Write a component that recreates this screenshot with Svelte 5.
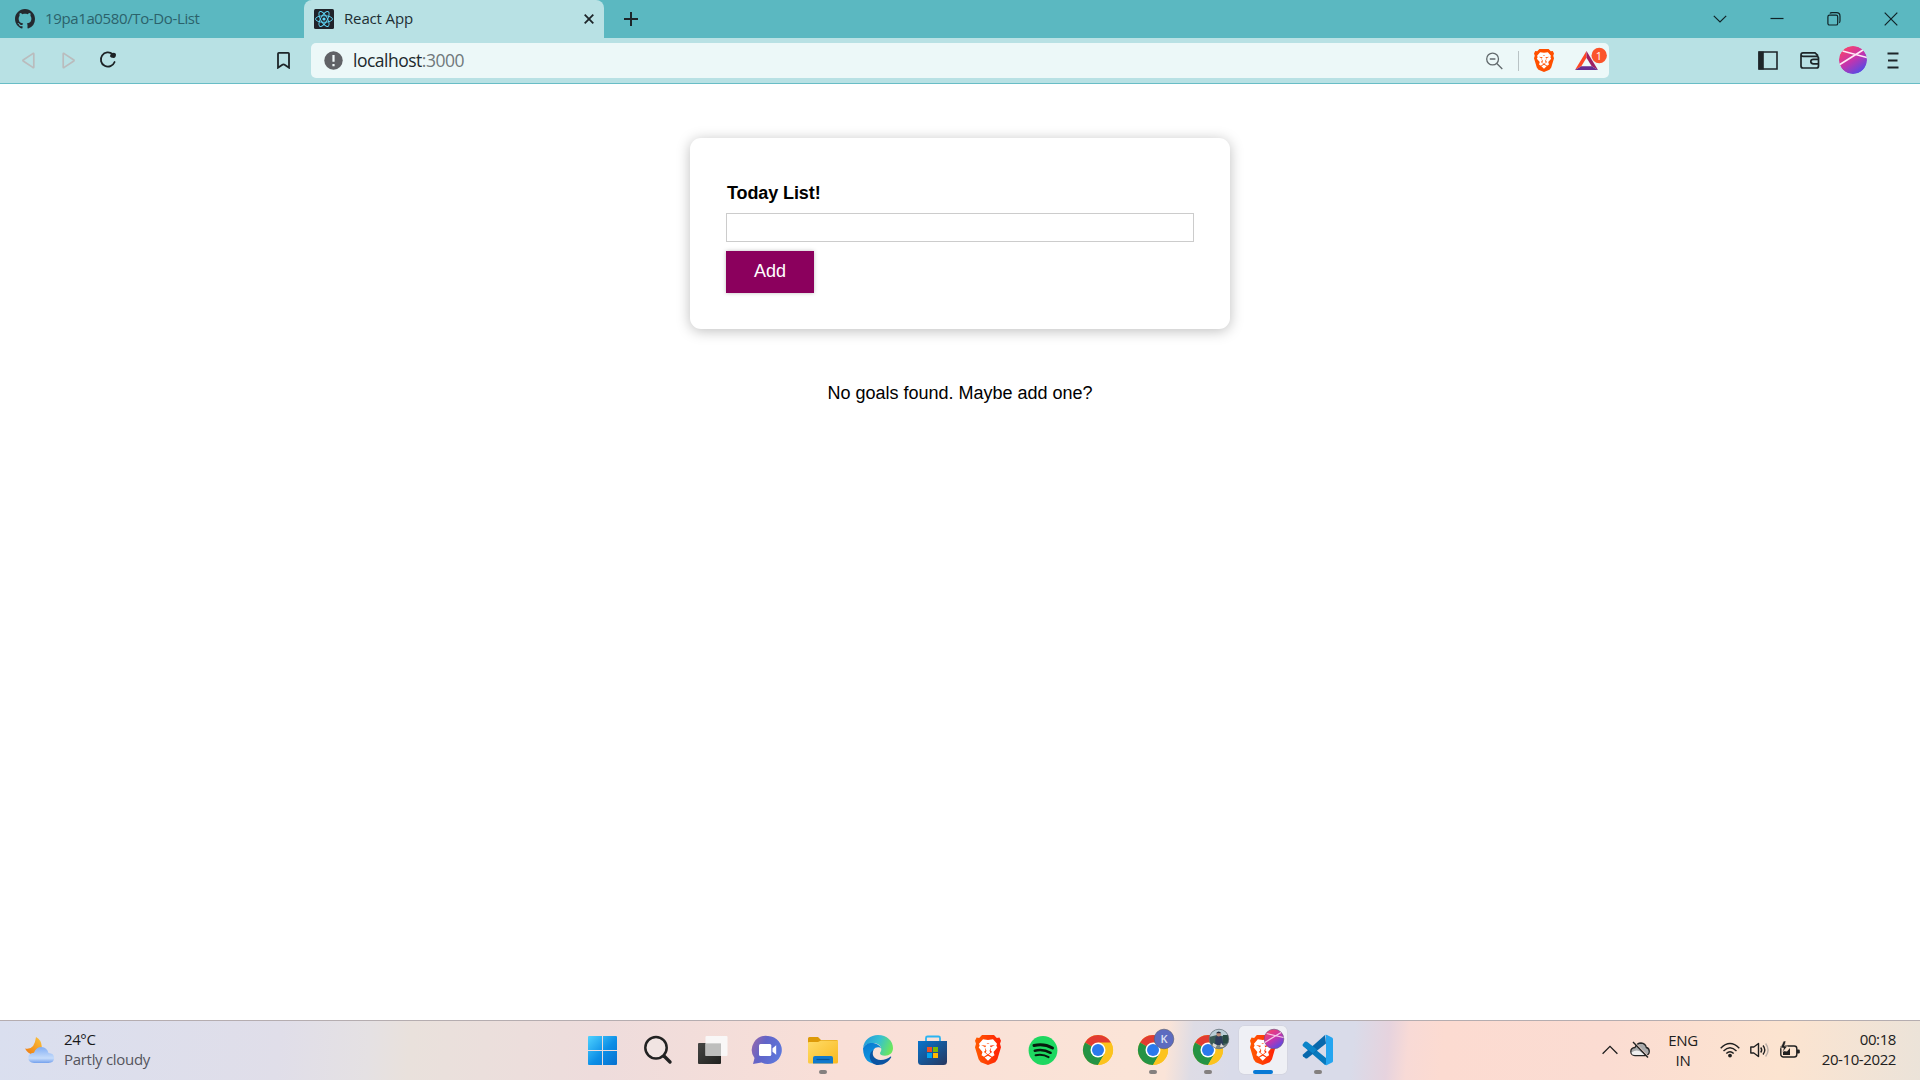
<script>
  let goal = $state('');
  const apps = ['start', 'search', 'tasks', 'chat', 'files', 'edge', 'store', 'brave', 'spotify', 'chrome', 'chromeK', 'chromePhoto', 'braveActive', 'code'];
  const running = ['files', 'chromeK', 'chromePhoto', 'code'];
</script>

{#snippet lion(fill)}
  <path d="M7 0h12l2.800 3 2.600-.3L26 6l-1 3 1 3.500-3.600 12.500-2.200 3L13 31 5.800 28l-2.200-3L0 12.500 1 9 0 6l1.600-3.300 2.600.3z" {fill} />
  <path d="M8 4.300l5 .9 5-.9 4 4.700-.7 2 1 2-3.800 4.600 1 3.200-2.500 1.700-4-2.800-4 2.800-2.500-1.700 1-3.200L3.700 13l1-2-.7-2zM9.600 23.300l3.400-2 3.400 2-3.400 3.200z" fill="#fff" />
  <path d="M6.200 10.300l5 .9-1 1.500zM19.800 10.300l-5 .9 1 1.500zM11.400 8.200h3.200L13 9zM9.700 12.500l1.800 3.800-.8 1.800 2.300 1.900 2.300-1.900-.8-1.800 1.800-3.800-.7 3.600 1.500 1.500-4.100 3-4.100-3 1.500-1.500z" {fill} />
{/snippet}

{#snippet chrome()}
  <circle cx="24" cy="24" r="15" fill="#fcc31e" />
  <path d="M24 24L11 16.500A15 15 0 0 1 37 16.500z" fill="#e23b31" />
  <path d="M11 16.500A15 15 0 0 0 24 39l6.500-11.300L24 24z" fill="#249344" />
  <path d="M24 16.500h13A15 15 0 0 1 24 39l6.500-11.300z" fill="#fcc31e" />
  <circle cx="24" cy="24" r="7.500" fill="#fff" />
  <circle cx="24" cy="24" r="6" fill="#2a79ed" />
{/snippet}

<div class="screen">
  <header>
    <div class="tabs">
      <div class="tab idle">
        <svg width="20" height="20" viewBox="0 0 16 16"><path fill="#24292f" d="M8 0C3.580 0 0 3.580 0 8c0 3.540 2.290 6.530 5.470 7.590.4.070.55-.17.55-.38 0-.19-.01-.82-.01-1.490-2.010.37-2.530-.49-2.690-.94-.09-.23-.48-.94-.82-1.130-.28-.15-.68-.52-.01-.53.63-.01 1.080.58 1.230.82.72 1.210 1.870.87 2.330.66.070-.52.28-.87.51-1.070-1.780-.2-3.640-.89-3.640-3.950 0-.87.31-1.590.82-2.150-.08-.2-.36-1.020.08-2.120 0 0 .67-.21 2.200.82.64-.18 1.320-.27 2-.27s1.360.09 2 .27c1.530-1.040 2.200-.82 2.200-.82.44 1.100.16 1.920.08 2.120.51.56.82 1.270.82 2.150 0 3.070-1.870 3.750-3.650 3.950.29.25.54.73.54 1.480 0 1.070-.01 1.930-.01 2.200 0 .21.15.46.55.38A8.010 8.010 0 0 0 16 8c0-4.420-3.580-8-8-8z" /></svg>
        <span class="repo">19pa1a0580/To-Do-List</span>
      </div>
      <div class="tab active">
        <svg width="20" height="20" viewBox="0 0 20 20"><rect width="20" height="20" rx="1.500" fill="#20232a" /><g fill="none" stroke="#61dafb" stroke-width=".9"><ellipse cx="10" cy="10" rx="8.500" ry="3.300" /><ellipse cx="10" cy="10" rx="8.500" ry="3.300" transform="rotate(60 10 10)" /><ellipse cx="10" cy="10" rx="8.500" ry="3.300" transform="rotate(120 10 10)" /></g><circle cx="10" cy="10" r="1.600" fill="#61dafb" /></svg>
        <span class="title">React App</span>
        <svg class="x" width="10" height="10" viewBox="0 0 10 10"><path d="M.7.7l8.600 8.600M9.300.7L.7 9.300" stroke="#1d2529" stroke-width="1.800" /></svg>
      </div>
      <svg class="plus" width="14" height="14" viewBox="0 0 14 14"><path d="M7 0v14M0 7h14" stroke="#1d2529" stroke-width="2" /></svg>
      <div class="window">
        <svg width="14" height="14" viewBox="0 0 14 14"><path d="M.8 3.800L7 10l6.200-6.200" /></svg>
        <svg width="14" height="14" viewBox="0 0 14 14"><path d="M.5 6.500h13" /></svg>
        <svg width="14" height="14" viewBox="0 0 14 14"><rect x=".9" y="3.200" width="9.800" height="9.800" rx="1.600" /><path d="M3 1.500Q3.300.7 5 .7h4.500q3.500 0 3.500 3.500v4.500q0 1.600-.8 2" /></svg>
        <svg width="14" height="14" viewBox="0 0 14 14"><path d="M.7.7l12.600 12.600M13.300.7L.7 13.300" /></svg>
      </div>
    </div>
    <div class="toolbar">
      <div class="nav">
        <svg class="back" width="13" height="17" viewBox="0 0 13 17"><path d="M11.800 2v13q0 1-1 .4L1.200 9q-.6-.5 0-1l9.600-6.400q1-.6 1 .4z" fill="none" stroke="#babcbd" stroke-width="1.700" /></svg>
        <svg class="fwd" width="13" height="17" viewBox="0 0 13 17"><path d="M1.200 2v13q0 1 1 .4L11.800 9q.6-.5 0-1L2.200 1.600q-1-.6-1 .4z" fill="none" stroke="#babcbd" stroke-width="1.700" /></svg>
        <svg class="reload" width="18" height="18" viewBox="0 0 18 18"><path d="M13.700 3.200A7.100 7.100 0 1 0 15.600 11" fill="none" stroke="#1c2225" stroke-width="1.800" stroke-linecap="round" /><path d="M12 2.300q4.500-1.600 5 1 0 3.700-2.400 3.700-3.200 0-3.700-1.700z" fill="#1c2225" /></svg>
        <svg class="mark" width="13" height="17" viewBox="0 0 13 17"><path d="M1 1.800q0-.9.900-.9h9.200q.9 0 .9.900V15.700L8 12.900q-1.500-1-3 0L1 15.700z" fill="none" stroke="#1d2528" stroke-width="1.800" /></svg>
      </div>
      <div class="address">
        <svg width="19" height="19" viewBox="0 0 19 19"><circle cx="9.500" cy="9.500" r="9.200" fill="#606266" /><path d="M9.500 4v6.800M9.500 13v2.300" stroke="#f2fafa" stroke-width="2.200" /></svg>
        <span class="url">localhost<i>:3000</i></span>
        <svg class="zoom" width="17" height="18" viewBox="0 0 17 18"><g fill="none" stroke="#626a6d" stroke-width="1.300"><circle cx="6.600" cy="7" r="5.900" /><path d="M3.800 7h5.600M10.800 11.500l5.500 5.500" /></g></svg>
        <b class="bar"></b>
        <svg width="20" height="23" viewBox="0 0 26 31" preserveAspectRatio="none">{@render lion('#ff5000')}</svg>
        <svg class="bat" width="34" height="24" viewBox="0 0 34 24"><path d="M11.500 4L0 23l6.300-3.700 5.200-8.600z" fill="#ff4724" /><path d="M11.500 4L23 23l-6.300-3.700-5.200-8.600z" fill="#9e1f63" /><path d="M0 23h23l-6.300-3.700H6.300z" fill="#662d91" /><circle cx="24.200" cy="8.500" r="7.700" fill="#fb542b" /><text x="24" y="12.500" text-anchor="middle" font-size="11" fill="#fff">1</text></svg>
      </div>
      <div class="tools">
        <svg width="20" height="19" viewBox="0 0 20 19"><path d="M1 1h18v17H1z" fill="none" stroke="#1d2528" stroke-width="1.600" /><path d="M.5.500h5.300v18H.5z" fill="#1d2528" /></svg>
        <svg width="20" height="17" viewBox="0 0 20 17"><g fill="none" stroke="#1d2528" stroke-width="1.700"><path d="M17.500 4.500V3.200L15 .9H3Q1 .9 1 3v11q0 2 2 2h13.500q2 0 2-2V6.300q0-2-2-2H3Q1.200 4.300 1 3M18.500 7.300h-5q-2.700 0-2.700 2.300t2.700 2.300h5z" /></g></svg>
        <svg class="avatar" width="28" height="28" viewBox="0 0 28 28"><defs><linearGradient id="av" x1=".15" y1="0" x2=".85" y2="1"><stop stop-color="#ff4463" /><stop offset=".5" stop-color="#c334ae" /><stop offset="1" stop-color="#404ff0" /></linearGradient></defs><circle cx="14" cy="14" r="14" fill="url(#av)" /><path d="M0 19L24 4M3.500 5L28 11.500" stroke="#ffe9f6" stroke-width="1.600" fill="none" /></svg>
        <svg width="12" height="17" viewBox="0 0 12 17"><path d="M.5 1.500h11M1 8.500h9.500M.5 15.500h11" stroke="#1d2528" stroke-width="1.800" /></svg>
      </div>
    </div>
  </header>

  <main>
    <form class="card" onsubmit={(e) => e.preventDefault()}>
      <label for="goal">Today List!</label>
      <input id="goal" type="text" bind:value={goal} />
      <button type="submit">Add</button>
    </form>
    <p>No goals found. Maybe add one?</p>
  </main>

  <footer>
    <div class="weather">
      <svg width="30" height="27" viewBox="0 0 30 27"><defs><linearGradient id="moon" x1="1" y1="0" x2="0" y2="1"><stop stop-color="#fbc43d" /><stop offset="1" stop-color="#ee7910" /></linearGradient><linearGradient id="cloud" x1="0" y1="0" x2="0" y2="1"><stop stop-color="#82aef4" /><stop offset=".7" stop-color="#c6dcfb" /><stop offset="1" stop-color="#74a1ed" /></linearGradient></defs><path d="M11 0q5.500 3 5.800 9.500Q15.500 17.500 8 17.500 3 17 0 11.500q9.500 2 11-11.500z" fill="url(#moon)" /><path d="M9 26q-5.500-.3-5.700-5Q3.500 16 9 15.800q2-5.800 7.500-5.800 5.500.3 7 6 5.500.2 5.700 5-.3 4.800-5.700 5z" fill="url(#cloud)" /></svg>
      <div><span class="temp">24°C</span><span class="sky">Partly cloudy</span></div>
    </div>

    <div class="apps">
      {#each apps as app}
        <div class="app" class:focused={app === 'braveActive'}>
          <svg width="48" height="48" viewBox="0 0 48 48">
            {#if app === 'start'}
              <defs><linearGradient id="win" x1="0" y1="0" x2="1" y2="1"><stop stop-color="#4fd2ff" /><stop offset=".55" stop-color="#0c8ee6" /><stop offset="1" stop-color="#0670cf" /></linearGradient></defs>
              <path d="M10 10h13v14H9V11q0-1 1-1zM24 10h13q1 0 1 1v13H24zM9 25h14v14H10q-1 0-1-1zM24 25h14v13q0 1-1 1H24z" fill="url(#win)" />
            {:else if app === 'search'}
              <circle cx="22" cy="21.700" r="10.700" fill="#f1e4e2" stroke="#222" stroke-width="2.500" /><path d="M30 30l6 6" stroke="#222" stroke-width="3.400" stroke-linecap="round" />
            {:else if app === 'tasks'}
              <defs><linearGradient id="dark" x1="0" y1="0" x2="1" y2="1"><stop stop-color="#464644" /><stop offset="1" stop-color="#20211f" /></linearGradient></defs>
              <rect x="9" y="17" width="23" height="21" rx="1" fill="url(#dark)" /><rect x="16.500" y="10" width="22" height="20" rx="1" fill="#fafafa" opacity=".9" /><path d="M16.500 17.500H32V30H16.500z" fill="#bebebd" />
            {:else if app === 'chat'}
              <defs><linearGradient id="talk" x1="0" y1=".2" x2="1" y2=".6"><stop stop-color="#9467ae" /><stop offset=".4" stop-color="#6164c8" /><stop offset="1" stop-color="#5d78dc" /></linearGradient></defs>
              <path d="M24 10a14 14 0 1 1-6.500 26.500L9 38l1.500-6A14 14 0 0 1 24 10z" fill="url(#talk)" /><rect x="15" y="18" width="12.300" height="12" rx="1.500" fill="#fff" /><path d="M28.500 22.300l3.700-3v9.400l-3.700-3z" fill="#fff" />
            {:else if app === 'files'}
              <defs><linearGradient id="fold" x1="0" y1="0" x2="1" y2="1"><stop stop-color="#ffdc68" /><stop offset="1" stop-color="#f9b91f" /></linearGradient></defs>
              <path d="M9 12.500q0-1.500 1.500-1.500h8.500l3 3h15.500q1.500 0 1.500 1.500V20H9z" fill="#dd9a08" /><path d="M9 17q0-1 1-1h9l3-1.500h17V36q0 1.500-1.500 1.500h-27Q9 37.500 9 36z" fill="url(#fold)" /><path d="M14 37.500V32q0-2 2-2h16q2 0 2 2v5.500z" fill="#1179cc" /><path d="M17.500 33.500h13" stroke="#075597" stroke-width="1.200" />
            {:else if app === 'edge'}
              <defs><linearGradient id="ea" x1="0" y1=".2" x2="1" y2=".5"><stop stop-color="#2399da" /><stop offset=".5" stop-color="#35bfd3" /><stop offset="1" stop-color="#6be75d" /></linearGradient><linearGradient id="eb" x1="0" y1="0" x2=".4" y2="1"><stop stop-color="#0678d0" /><stop offset="1" stop-color="#139ae1" /></linearGradient></defs>
              <path d="M9 22C10 14 16.500 9 24 9c9 0 15 6 15 13 0 5-3.500 7.700-8 7.700-3.300 0-5-1.200-5-2.400 0-1 1.300-1.500 1.300-4C27.300 19.500 23.500 17 19 17c-5 0-9 2.500-10 5z" fill="url(#ea)" /><path d="M9 22.500C10.500 18.500 14.500 16.500 19 17c4 .4 7.300 2.800 8.200 5.500-1.400-1.500-5.800-2-7.800 1.500-3.400 6 1.600 12.600 9.400 11.700C25 38.800 9.500 41 9 22.500z" fill="url(#eb)" /><path d="M19.500 24c-2.500 5 1 9.800 7 10 4 .1 7.500-1.700 9.800-3.300.6-.4 1.200.2.800.8-2.500 4.300-7 7.500-13 7.500-8 0-11.500-11-4.600-15z" fill="#0b54a2" />
            {:else if app === 'store'}
              <defs><linearGradient id="bag" x1="0" y1="0" x2="1" y2="1"><stop stop-color="#0874cc" /><stop offset="1" stop-color="#27375f" /></linearGradient></defs>
              <path d="M17 16v-4q0-1.500 1.500-1.500h11q1.500 0 1.500 1.500v4" fill="none" stroke="#2bb4f2" stroke-width="1.800" /><path d="M9 15h29v20.500q0 3.500-3.500 3.500h-22Q9 39 9 35.500z" fill="url(#bag)" /><path d="M18 21h5v5h-5z" fill="#f25022" /><path d="M24 21h5v5h-5z" fill="#7fba00" /><path d="M18 27h5v5h-5z" fill="#00a4ef" /><path d="M24 27h5v5h-5z" fill="#ffb900" />
            {:else if app === 'brave'}
              <defs><linearGradient id="flame" x1="0" y1="0" x2="1" y2="0"><stop stop-color="#ff5a00" /><stop offset="1" stop-color="#ff2107" /></linearGradient></defs>
              <g transform="translate(11 9) scale(1 .97)">{@render lion('url(#flame)')}</g>
            {:else if app === 'spotify'}
              <circle cx="24" cy="24.500" r="14.400" fill="#1ed760" /><path d="M15 19.500q10-2.300 18.500 2.500" fill="none" stroke="#061a0d" stroke-width="3" stroke-linecap="round" /><path d="M15.800 24.700q8.500-2 15.800 2.100" fill="none" stroke="#061a0d" stroke-width="2.500" stroke-linecap="round" /><path d="M16.600 29.200q7.300-1.500 13 1.900" fill="none" stroke="#061a0d" stroke-width="2" stroke-linecap="round" />
            {:else if app === 'chrome'}
              {@render chrome()}
            {:else if app === 'chromeK'}
              {@render chrome()}
              <circle cx="35" cy="13" r="9.800" fill="#5c6bc0" stroke="#5a6078" stroke-width=".7" /><text x="35" y="17" text-anchor="middle" font-size="11" font-weight="600" fill="#dfe2f4">K</text>
            {:else if app === 'chromePhoto'}
              {@render chrome()}
              <defs><clipPath id="face"><circle cx="35" cy="13" r="9.800" /></clipPath></defs>
              <g clip-path="url(#face)"><path d="M25 3h20v20H25z" fill="#3b5c55" /><path d="M25 3h20v6l-7 1-5-1-8 2z" fill="#b9cdd6" /><path d="M39 9h6v8h-6z" fill="#284a43" /><path d="M31.500 11q3.500-2.500 6.500 0l1.500 8h-8.500z" fill="#2d3c5c" /><path d="M25 18l7 1h8l5-2v6H25z" fill="#7b8582" /><path d="M29 17l4 2-2 4h-3zM37 17l3 4h-4z" fill="#ddd9d4" /><circle cx="34.700" cy="8.300" r="2.200" fill="#bc8d78" /><path d="M32 7.200q2.700-3.500 5.400 0z" fill="#222939" /></g>
              <circle cx="35" cy="13" r="9.800" fill="none" stroke="#6d7580" stroke-width=".7" />
            {:else if app === 'braveActive'}
              <g transform="translate(11 9) scale(.98 .97)">{@render lion('url(#flame)')}</g>
              <circle cx="35" cy="13" r="9.800" fill="url(#av)" stroke="#785084" stroke-width=".7" /><path d="M25.800 16.500L42 6.500M27.700 7.500L44.500 11.500" stroke="#f5c9e9" stroke-width="1.200" />
            {:else}
              <path d="M11.500 15.500L32 32v7h-1L9 20q-.7-1 0-1.700l1.500-2q.5-.8 1-.8z" fill="#0879bd" /><path d="M31 9L9 28.500q-.7 1 0 1.700l2.400 2q1 .6 2 0L32 17.500z" fill="#0868ac" /><path d="M11.400 15.900q1-.6 2 0L23 23.400l-4 4.200L9 20q-.7-1 0-1.800z" fill="#0b84c9" /><path d="M31 9q1-.6 2 0l5 2.500q1 .5 1 1.500v22q0 1-1 1.500L33 39q-1 .5-2-.2 1 0 1-2V11q0-2-1-2z" fill="#25a5f0" />
            {/if}
            {#if running.includes(app)}
              <rect x="20" y="44" width="8" height="4" rx="2" fill="#84807f" />
            {:else if app === 'braveActive'}
              <rect x="14" y="44" width="20" height="4" rx="2" fill="#0879d5" />
            {/if}
          </svg>
        </div>
      {/each}
    </div>

    <div class="tray">
      <svg width="16" height="10" viewBox="0 0 16 10"><path d="M.6 8.800L8 1.400l7.400 7.400" fill="none" stroke="#1e1e1e" stroke-width="1.300" /></svg>
      <svg class="drive" width="20" height="18" viewBox="0 0 20 18"><path d="M5 14.500Q1 14.300.8 10.500.8 7 5 6.500 7 2 11 2q4.500.3 5.300 4.500 3 .7 3 4-.2 3.800-4.300 4z" fill="#a9a9aa" stroke="#262626" stroke-width="1.300" /><path d="M5 14Q1.500 14 1.500 11.500q4-3 8-1.500l5.500 4z" fill="#efefef" /><path d="M4 1l14 14.500" stroke="#fce0d6" stroke-width="1.200" /><path d="M3 1l15 15.500" stroke="#222" stroke-width="1.400" /></svg>
      <div class="lang">ENG<br />IN</div>
      <svg width="20" height="16" viewBox="0 0 20 16"><g fill="none" stroke="#202020" stroke-width="1.400"><path d="M.7 6.200q9.300-9.300 18.600 0M3.500 9q6.500-6.500 13 0M6.300 11.600q3.700-3.700 7.400 0" /></g><circle cx="10" cy="13.600" r="1.900" fill="#202020" /></svg>
      <svg width="20" height="16" viewBox="0 0 20 16"><g fill="none" stroke="#202020" stroke-width="1.400" stroke-linejoin="round"><path d="M.8 5h3L8.500 1.500v13L3.800 11h-3zM10.700 5.500q2 2.500 0 5M13 3.500q3.600 4.500 0 9" /><path d="M15.600 1.500q5 6.500 0 13" stroke="#b9aea7" /></g></svg>
      <svg width="20" height="18" viewBox="0 0 20 18"><rect x=".8" y="5" width="16" height="11" rx="2.500" fill="none" stroke="#202020" stroke-width="1.400" /><path d="M3 14V10l4 .5L10 7v7z" fill="#202020" /><path d="M17 8.500h1.500q1.300 0 1.300 1.200v1.600q0 1.200-1.300 1.200H17z" fill="#202020" /><path d="M3.500 0L.5 7h3l-1 4.500L7.500 5h-3L6 0z" fill="#202020" stroke="#fce3d2" stroke-width=".6" /></svg>
      <div class="clock">00:18<br /><span>20-10-2022</span></div>
    </div>
  </footer>
</div>

<style>
  :global(body) { margin: 0; background: #fff; }
  .screen { width: 1920px; height: 1080px; display: flex; flex-direction: column; overflow: hidden; font-family: "Open Sans", "Noto Sans", sans-serif; }
  svg { display: block; flex: none; }
  span, .clock, .lang { white-space: nowrap; }

  .tabs { height: 38px; display: flex; align-items: center; background: #5bb8c1; }
  .tab { height: 38px; box-sizing: border-box; display: flex; align-items: center; }
  .idle { width: 304px; padding-left: 15px; gap: 10px; font-size: 15px; color: #2b626b; }
  .repo, .title { padding-bottom: 2px; }
  .repo { letter-spacing: -.37px; }
  .active { width: 300px; padding: 0 10px; gap: 10px; border-radius: 8px 8px 0 0; background: #b8e1e4; font-size: 15px; color: #1d2e33; }
  .title { letter-spacing: -.15px; }
  .x { margin-left: auto; }
  .plus { margin-left: 20px; }
  .window { margin-left: auto; padding-right: 22px; display: flex; gap: 43px; fill: none; stroke: #102327; stroke-width: 1.200; }

  .toolbar { height: 45px; display: flex; align-items: center; background: #b8e1e4; border-bottom: 1px solid #68bdc6; }
  .nav { width: 311px; padding-bottom: 1px; display: flex; align-items: center; }
  .back { margin-left: 22px; }
  .fwd { margin-left: 27px; }
  .reload { margin-left: 24px; }
  .mark { margin-left: 160px; }
  .address { width: 1298px; height: 35px; box-sizing: border-box; padding: 0 1px 0 13px; display: flex; align-items: center; border-radius: 5px; background: #ecf8f8; }
  .url { margin-left: 10px; padding-bottom: 2px; font-size: 17.500px; letter-spacing: -.5px; color: #20292c; }
  .url i { font-style: normal; color: #70797c; }
  .zoom { margin-left: auto; }
  .bar { width: 1px; height: 20px; margin: 0 15px; background: #b9c3c5; }
  .bat { margin: 0 -1px 4px 21px; }
  .tools { flex: 1; padding: 0 21px 1px 0; display: flex; align-items: center; justify-content: flex-end; gap: 20px; }
  .tools svg:first-child { margin-right: 2px; }
  .avatar { margin-left: -1px; border-radius: 50%; }

  main { flex: 1; display: flex; flex-direction: column; align-items: center; font-family: "Liberation Sans", Arial, sans-serif; font-size: 18px; color: #000; }
  .card { width: 540px; height: 191px; margin-top: 54px; padding: 36px; box-sizing: border-box; display: flex; flex-direction: column; align-items: flex-start; border-radius: 11px; box-shadow: 0 2px 14px rgba(0, 0, 0, .26); }
  label { margin: 9px 0 0 1px; line-height: 20px; font-weight: 700; letter-spacing: -.1px; }
  input { width: 468px; height: 29px; margin-top: 10px; padding: 0 5px; box-sizing: border-box; border: 1px solid #ccc; font: inherit; outline: none; }
  button { width: 88px; height: 42px; margin-top: 9px; padding: 0 0 2px; border: 0; background: #8b005d; color: #fff; font: inherit; box-shadow: 0 0 4px rgba(0, 0, 0, .26); }
  p { margin: 54px 0 0; line-height: 20px; }

  footer { height: 60px; box-sizing: border-box; padding-bottom: 1px; border-top: 1px solid #b5adb0; display: grid; grid-template-columns: 579px 763px 1fr; align-items: center; background: linear-gradient(95deg, #dadfef 0, #e0dee9 280px, #e5e1e3 370px, #e9e1dc 410px, #eedcdc 600px, #f9dfd7 840px, #fbe4d7 1130px, #fae4d8 1165px, #dedce5 1190px, #d9dbe9 1230px, #d9dbe9 1350px, #e6d3de 1385px, #f8dad6 1405px, #fcdbd1 1440px, #fbdcd2 1600px, #fce4d0 1780px, #ebe3d9 1920px); }
  .weather { padding-left: 25px; display: flex; align-items: center; gap: 9px; font-size: 15px; line-height: 20px; }
  .weather div { display: flex; flex-direction: column; padding-bottom: 2px; }
  .temp { color: #18191b; letter-spacing: -.4px; }
  .sky { color: #55555d; letter-spacing: -.3px; }
  .apps { display: flex; gap: 7px; }
  .app { width: 48px; height: 48px; border-radius: 5px; }
  .focused { background: #eff0f5; box-shadow: 0 0 0 .5px #cfd0da; }
  .tray { display: flex; align-items: center; padding-right: 24px; justify-content: flex-end; gap: 10px; color: #202020; font-size: 15px; line-height: 20px; }
  .drive { margin-left: 2px; }
  .lang { width: 32px; margin: 0 11px 0 7px; padding-bottom: 1px; text-align: center; letter-spacing: -.3px; }
  .clock { width: 86px; padding-bottom: 2px; text-align: right; letter-spacing: -.4px; }
</style>
